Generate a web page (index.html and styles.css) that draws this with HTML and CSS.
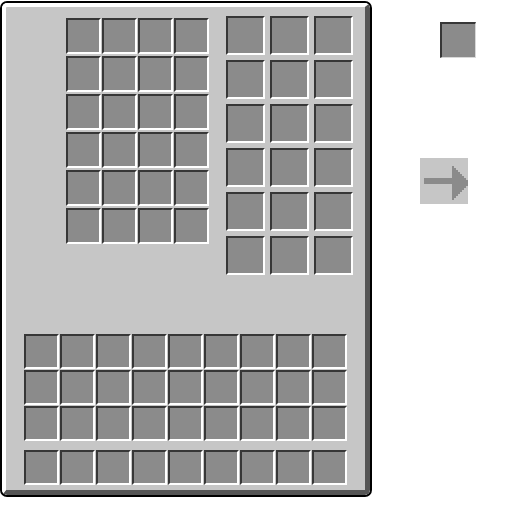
FILE: index.html
```html
<!DOCTYPE html>
<html lang="en">
<head>
    <meta charset="UTF-8">
    <title>Container GUI</title>
    <link rel="stylesheet" href="styles.css">
</head>
<body>

    <div class="screen">
        <!-- Main panel -->
        <div class="panel">
            <div class="panel-inner">
                <div class="top-row">
                    <div class="grid grid-left" id="gridLeft"></div>
                    <div class="grid grid-right" id="gridRight"></div>
                </div>
                <div class="grid grid-inv" id="gridInv"></div>
                <div class="grid grid-hotbar" id="gridHotbar"></div>
            </div>
        </div>

        <!-- Loose pieces of the texture -->
        <div class="extras">
            <div class="single-slot"></div>
            <div class="arrow-box">
                <svg width="48" height="46" viewBox="0 0 48 46" shape-rendering="crispEdges">
                    <path fill="#8b8b8b" d="M32 8 h2 v2 h2 v2 h2 v2 h2 v2 h2 v2 h2 v2 h2 v2 h2 v2 h2 v2 h-2 v2 h-2 v2 h-2 v2 h-2 v2 h-2 v2 h-2 v2 h-2 v2 h-2 v2 h-2 V26 H4 V20 H32 Z"/>
                </svg>
            </div>
        </div>
    </div>

    <script>
        function fillGrid(id, count) {
            const grid = document.getElementById(id);
            for (let i = 0; i < count; i++) {
                const slot = document.createElement('div');
                slot.classList.add('slot');
                grid.appendChild(slot);
            }
        }

        fillGrid('gridLeft', 24);
        fillGrid('gridRight', 18);
        fillGrid('gridInv', 27);
        fillGrid('gridHotbar', 9);
    </script>

</body>
</html>
```

FILE: styles.css
```css
body {
    margin: 0;
    padding: 0;
    background-color: #ffffff;
    font-family: 'Liberation Sans', Arial, sans-serif;
}

.screen {
    display: flex;
    align-items: flex-start;
}

.panel {
    margin-top: 1px;
    width: 368px;
    height: 492px;
    border: 2px solid #000000;
    border-radius: 7px;
    overflow: hidden;
}

.panel-inner {
    box-sizing: border-box;
    height: 100%;
    background-color: #c6c6c6;
    border-top: 4px solid #ffffff;
    border-left: 4px solid #ffffff;
    border-right: 5px solid #555555;
    border-bottom: 5px solid #555555;
    border-radius: 5px;
}

.top-row {
    display: flex;
    align-items: flex-start;
    padding-left: 60px;
}

.grid {
    display: grid;
}

.slot {
    box-sizing: border-box;
    background-color: #8b8b8b;
    border-top: 2px solid #373737;
    border-left: 2px solid #373737;
    border-right: 2px solid #ffffff;
    border-bottom: 2px solid #ffffff;
}

.grid-left {
    margin-top: 11px;
    grid-template-columns: repeat(4, 35px);
    grid-auto-rows: 36px;
    column-gap: 1px;
    row-gap: 2px;
}

.grid-right {
    margin-top: 9px;
    margin-left: 17px;
    grid-template-columns: repeat(3, 39px);
    grid-auto-rows: 39px;
    gap: 5px;
}

.grid-inv {
    margin-top: 59px;
    margin-left: 18px;
    grid-template-columns: repeat(9, 35px);
    grid-auto-rows: 35px;
    gap: 1px;
}

.grid-hotbar {
    margin-top: 9px;
    margin-left: 18px;
    grid-template-columns: repeat(9, 35px);
    grid-auto-rows: 35px;
    gap: 1px;
}

.extras {
    display: flex;
    flex-direction: column;
    align-items: flex-start;
}

.single-slot {
    box-sizing: border-box;
    width: 36px;
    height: 36px;
    margin-top: 22px;
    margin-left: 68px;
    background-color: #8b8b8b;
    border-top: 2px solid #373737;
    border-left: 2px solid #373737;
    border-right: 1px solid #d8d8d8;
    border-bottom: 1px solid #d8d8d8;
}

.arrow-box {
    width: 48px;
    height: 46px;
    margin-top: 100px;
    margin-left: 48px;
    background-color: #c6c6c6;
}

.arrow-box svg {
    display: block;
}
```
